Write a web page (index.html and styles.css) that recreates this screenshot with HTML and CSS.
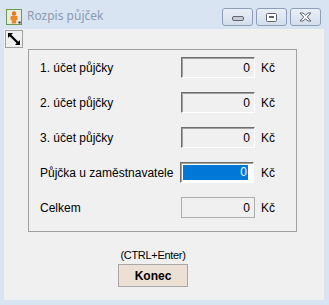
FILE: index.html
```html
<!DOCTYPE html>
<html lang="cs">
  <head>
    <meta charset="UTF-8" />
    <title>Rozpis půjček</title>
    <link rel="stylesheet" href="styles.css">
  </head>
  <body>
    <div class="window">
      <div class="titlebar">
        <svg class="app-icon" width="16" height="16" viewBox="0 0 16 16">
          <rect x="0.5" y="0.5" width="15" height="15" fill="#e9ece6" stroke="#6f9a4e" />
          <circle cx="8" cy="4.5" r="2.2" fill="#e07a1c" />
          <path d="M4.5 8 Q4.5 6.8 6 6.8 L10 6.8 Q11.5 6.8 11.5 8 L11.5 11 L10.2 11 L10.2 14.5 L5.8 14.5 L5.8 11 L4.5 11 Z" fill="#e98a2a" />
          <rect x="12.5" y="12.5" width="2" height="2" fill="#222" />
        </svg>
        <span class="title">Rozpis půjček</span>
        <div class="caption-btns">
          <div class="cap-btn min">
            <svg width="12" height="6" viewBox="0 0 12 6"><rect x="0.5" y="0.5" width="11" height="4" rx="1.5" fill="#c9cdd3" stroke="#5b6470" /></svg>
          </div>
          <div class="cap-btn">
            <svg width="11" height="9" viewBox="0 0 11 9"><rect x="0.5" y="0.5" width="10" height="8" rx="1" fill="#fff" stroke="#5b6470" /><rect x="3" y="3" width="5" height="2" fill="#5b6470" /></svg>
          </div>
          <div class="cap-btn">
            <svg width="13" height="10" viewBox="0 0 13 10"><path d="M1 1 L4 1 L6.5 3.2 L9 1 L12 1 L8.3 5 L12 9 L9 9 L6.5 6.8 L4 9 L1 9 L4.7 5 Z" fill="#fff" stroke="#5b6470" stroke-linejoin="round" /></svg>
          </div>
        </div>
      </div>

      <div class="client">
        <div class="resize-btn">
          <svg width="14" height="14" viewBox="0 0 14 14">
            <path d="M1 1 L6 1 L4.3 2.7 L11.3 9.7 L13 8 L13 13 L8 13 L9.7 11.3 L2.7 4.3 L1 6 Z" fill="#000" />
          </svg>
        </div>

        <div class="group">
          <div class="row">
            <span class="label">1. účet půjčky</span>
            <div class="field">0</div>
            <span class="unit">Kč</span>
          </div>
          <div class="row">
            <span class="label">2. účet půjčky</span>
            <div class="field">0</div>
            <span class="unit">Kč</span>
          </div>
          <div class="row">
            <span class="label">3. účet půjčky</span>
            <div class="field">0</div>
            <span class="unit">Kč</span>
          </div>
          <div class="row">
            <span class="label">Půjčka u zaměstnavatele</span>
            <div class="field focused"><span class="sel">0</span></div>
            <span class="unit">Kč</span>
          </div>
          <div class="row">
            <span class="label">Celkem</span>
            <div class="field total">0</div>
            <span class="unit">Kč</span>
          </div>
        </div>

        <div class="footer">
          <span class="hint">(CTRL+Enter)</span>
          <button type="button" class="btn-close">Konec</button>
        </div>
      </div>
    </div>
  </body>
</html>
```

FILE: styles.css
```css
body {
  margin: 0;
  background: #d8e4f2;
}

.window {
  width: 329px;
  height: 305px;
  box-sizing: border-box;
  padding: 0 5px 5px 4px;
  background: #d8e4f2;
  display: flex;
  flex-direction: column;
}

.titlebar {
  height: 29px;
  display: flex;
  align-items: flex-start;
}

.app-icon {
  margin: 9px 0 0 2px;
}

.title {
  margin: 8px 0 0 5px;
  font-family: "Noto Sans", sans-serif;
  font-size: 12px;
  line-height: 16px;
  color: #8b9bb0;
}

.caption-btns {
  margin: 8px 3px 0 auto;
  display: flex;
  gap: 3px;
}

.cap-btn {
  width: 29px;
  height: 16px;
  border: 1px solid #8d9fb8;
  border-radius: 3px;
  background: linear-gradient(#e9eff7, #d3deec);
  display: flex;
  align-items: center;
  justify-content: center;
}

.cap-btn.min svg {
  margin-top: 3px;
}

.client {
  flex: 1;
  background: #f0f0f0;
  display: flex;
  flex-direction: column;
  align-items: flex-start;
  font-family: "Liberation Sans", Arial, sans-serif;
  font-size: 12px;
  color: #000;
}

.resize-btn {
  width: 16px;
  height: 16px;
  margin: 1px 0 0 1px;
  border: 1px solid #a0a0a0;
  background: #f0f0f0;
  display: flex;
  align-items: center;
  justify-content: center;
}

.group {
  width: 256px;
  margin: 1px 0 0 24px;
  padding: 7px 0 13px 11px;
  border: 1px solid #a0a0a0;
  display: flex;
  flex-direction: column;
  gap: 14px;
}

.row {
  height: 21px;
  display: flex;
  align-items: center;
}

.label {
  width: 141px;
  white-space: nowrap;
}

.field {
  width: 68px;
  height: 19px;
  padding: 0 4px 0 0;
  border-top: 1px solid #6e6e6e;
  border-left: 1px solid #6e6e6e;
  border-right: 1px solid #fff;
  border-bottom: 1px solid #fff;
  box-shadow: inset 1px 1px #a0a0a0;
  background: #f0f0f0;
  text-align: right;
  line-height: 20px;
}

.field.focused {
  margin: 0 1px 0 -1px;
  width: 65px;
  height: 15px;
  padding: 2px 5px 2px 2px;
  background: #fff;
}

.sel {
  display: block;
  height: 15px;
  line-height: 15px;
  padding-right: 1px;
  background: #0078d7;
  color: #fff;
}

.field.total {
  border: 1px solid #adadad;
  box-shadow: none;
}

.unit {
  margin-left: 6px;
}

.footer {
  width: 70px;
  margin: 17px 0 0 114px;
  display: flex;
  flex-direction: column;
  align-items: center;
  gap: 2px;
}

.hint {
  font-size: 11px;
  line-height: 13px;
  letter-spacing: -0.3px;
  white-space: nowrap;
}

.btn-close {
  width: 70px;
  height: 23px;
  border: 1px solid #a8a8a8;
  background: #ecdfd4;
  font-family: "Liberation Sans", Arial, sans-serif;
  font-size: 12px;
  font-weight: bold;
  padding: 0;
}
```
